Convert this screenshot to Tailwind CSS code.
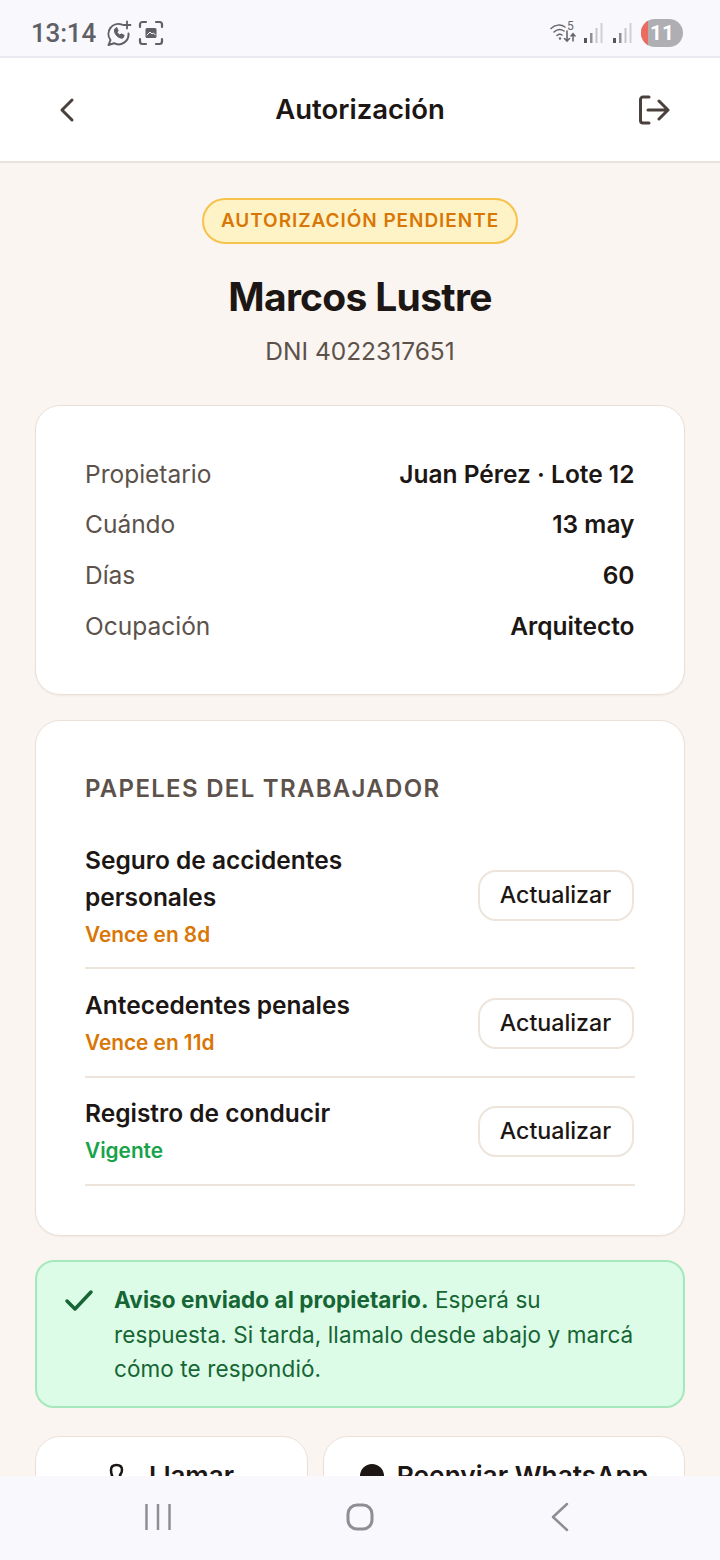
<!DOCTYPE html>
<html lang="es">
<head>
  <meta charset="UTF-8">
  <meta name="viewport" content="width=device-width, initial-scale=1.0">
  <title>Autorización</title>
  <script src="https://cdn.jsdelivr.net/npm/@tailwindcss/browser@4"></script>
</head>
<body class="bg-[#faf5f1] font-['Inter',sans-serif]">
  <div class="flex flex-col h-[1560px] w-[720px] overflow-hidden">
    <!-- status bar -->
    <div class="flex items-center justify-between h-[58px] shrink-0 bg-[#f8f8fd] border-b-2 border-[#e9e9f0] pl-[31px] pr-[37px] pt-[10px]">
      <div class="flex items-center text-[#5f5f66]">
        <span class="font-['Roboto',sans-serif] text-[26px] font-medium leading-none tracking-[-0.2px]">13:14</span>
        <svg class="ml-[10px]" width="26" height="26" viewBox="0 0 26 26" fill="none" stroke="currentColor" stroke-width="2" stroke-linecap="round" stroke-linejoin="round">
          <path d="M16 4.600A10 10 0 0 0 4.500 20L2.500 25L8 23.200A10 10 0 0 0 22.500 13.500"/>
          <path d="M8.500 9.500c-.8 4.500 4 9.500 8.500 8.500l1.200-2.700-3-1.500-1.300 1.300c-1.300-.6-2.300-1.700-2.900-3l1.200-1.200-1.300-3.100z" fill="currentColor" stroke-width="1"/>
          <path d="M21 1.500v7M17.500 5h7" stroke-width="1.800"/>
        </svg>
        <svg class="ml-[6px]" width="26" height="26" viewBox="0 0 26 26" fill="none" stroke="currentColor" stroke-width="2.200" stroke-linecap="round" stroke-linejoin="round">
          <path d="M2 7V4.500A2.500 2.500 0 0 1 4.500 2H8M18 2h3.500A2.500 2.500 0 0 1 24 4.500V7M24 19v2.500a2.500 2.500 0 0 1-2.500 2.500H18M8 24H4.500A2.500 2.500 0 0 1 2 21.500V19"/>
          <rect x="7.500" y="8" width="11" height="10" rx="1.500" fill="currentColor" stroke="none"/>
          <path d="M9 15l3-3 2 2 1.500-1 2 2" stroke="#f8f8fd" stroke-width="1"/>
        </svg>
      </div>
      <div class="flex items-center">
        <svg width="26" height="22" viewBox="0 0 26 22" fill="none" stroke="#66666c" stroke-width="1.500" stroke-linecap="round">
          <path d="M1 6.500C5 2.500 11 2 15 5M4 10c3-2.700 7-3 10-1M7 13.500c1.500-1.300 3.500-1.500 5-.5"/>
          <circle cx="10" cy="16.500" r="1.200" fill="#66666c" stroke="none"/>
          <path d="M17 9v10M14.500 16.500l2.500 2.500 2.500-2.500M23 19v-7M21 14l2-2.200 2 2.200" stroke-width="1.600"/>
        </svg>
        <span class="font-['Roboto',sans-serif] text-[12px] leading-none text-[#66666c] ml-[-9px] mt-[-14px] w-[10px]">5</span>
        <svg class="ml-[6px]" width="20" height="20" viewBox="0 0 20 20">
          <rect x="1" y="15" width="3" height="5" fill="#55555b"/><rect x="7" y="10" width="2.500" height="10" fill="#8e8e94"/><rect x="12.500" y="5" width="2" height="15" fill="#c6c6cb"/><rect x="17.500" y="0" width="2" height="20" fill="#d0d0d5"/>
        </svg>
        <svg class="ml-[9px]" width="20" height="20" viewBox="0 0 20 20">
          <rect x="1" y="15" width="3" height="5" fill="#55555b"/><rect x="7" y="10" width="2.500" height="10" fill="#8e8e94"/><rect x="12.500" y="5" width="2" height="15" fill="#c6c6cb"/><rect x="17.500" y="0" width="2" height="20" fill="#d0d0d5"/>
        </svg>
        <div class="relative ml-[9px] w-[42px] h-[28px] rounded-full bg-[#aeaeb3] overflow-hidden flex items-center justify-center">
          <div class="absolute left-0 top-0 bottom-0 w-[7px] bg-[#ec6a5e]"></div>
          <span class="font-['Roboto',sans-serif] text-[21px] font-bold leading-none text-white">11</span>
        </div>
      </div>
    </div>

    <!-- top bar -->
    <header class="flex items-center justify-between h-[105px] shrink-0 bg-white border-b-2 border-[#eae3dc] pl-[54px] pr-[50px]">
      <svg width="26" height="26" viewBox="0 0 26 26" fill="none" stroke="#4a413c" stroke-width="3" stroke-linecap="round" stroke-linejoin="round">
        <path d="M18 3L8 13l10 10"/>
      </svg>
      <h1 class="ml-[2px] text-[27.500px] font-semibold text-[#1c1614] leading-none">Autorización</h1>
      <svg width="32" height="32" viewBox="0 0 32 32" fill="none" stroke="#4a413c" stroke-width="3" stroke-linecap="round" stroke-linejoin="round">
        <path d="M11 3H5a2.500 2.500 0 0 0-2.500 2.500v21A2.500 2.500 0 0 0 5 29h6"/>
        <path d="M10 16h20M21 7l9 9-9 9"/>
      </svg>
    </header>

    <main class="flex-1 overflow-hidden px-[35px] pt-[35px]">
      <div class="flex flex-col items-center">
        <span class="h-[46px] flex items-center px-[17px] rounded-full bg-[#fef3c7] border-2 border-[#f5c34b] text-[#d97706] text-[19px] font-semibold tracking-[0.95px]">AUTORIZACIÓN PENDIENTE</span>
        <h2 class="mt-[28px] text-[39px] leading-[50px] font-bold text-[#1c1614] tracking-[-0.7px]">Marcos Lustre</h2>
        <p class="mt-[14px] text-[24.500px] leading-[30px] text-[#5c524b]">DNI 4022317651</p>
      </div>

      <!-- datos de la visita -->
      <section class="mt-[39px] bg-white border-[1.500px] border-[#ebe0d8] rounded-[25px] shadow-[0_1px_2px_rgba(0,0,0,0.05)] pl-[49px] pr-[49.500px] pt-[52.500px] h-[290px]">
        <dl class="flex flex-col gap-[20.700px] text-[24.500px] leading-[30px]">
          <div class="flex justify-between"><dt class="text-[#5c524b]">Propietario</dt><dd class="font-semibold text-[#1c1614]">Juan Pérez · Lote 12</dd></div>
          <div class="flex justify-between"><dt class="text-[#5c524b]">Cuándo</dt><dd class="font-semibold text-[#1c1614]">13 may</dd></div>
          <div class="flex justify-between"><dt class="text-[#5c524b]">Días</dt><dd class="font-semibold text-[#1c1614]">60</dd></div>
          <div class="flex justify-between"><dt class="text-[#5c524b]">Ocupación</dt><dd class="font-semibold text-[#1c1614]">Arquitecto</dd></div>
        </dl>
      </section>

      <!-- documentos -->
      <section class="mt-[25px] bg-white border-[1.500px] border-[#ebe0d8] rounded-[25px] shadow-[0_1px_2px_rgba(0,0,0,0.05)] pl-[48.500px] pr-[49.500px] pt-[51.500px] h-[516px]">
        <h3 class="pl-[0.500px] text-[24px] leading-[32px] font-semibold tracking-[1.300px] text-[#5c524b]">PAPELES DEL TRABAJADOR</h3>
        <ul class="mt-[19px]">
          <li class="flex items-center justify-between h-[145px] border-b-2 border-[#ede5dc] pt-[2px]">
            <div class="pl-[0.500px] mt-[2px]">
              <p class="text-[24.500px] leading-[37px] font-semibold text-[#1c1614]">Seguro de accidentes<br>personales</p>
              <p class="text-[20.800px] leading-[37px] font-semibold text-[#d97706]">Vence en 8d</p>
            </div>
            <button class="mr-[1px] mb-[1px] w-[156px] h-[51px] rounded-[18px] border-2 border-[#ede5dc] bg-white text-[23.200px] font-medium text-[#1c1614]">Actualizar</button>
          </li>
          <li class="flex items-center justify-between h-[109px] border-b-2 border-[#ede5dc] pt-[2px]">
            <div class="pl-[0.500px] mt-[2px]">
              <p class="text-[24.500px] leading-[37px] font-semibold text-[#1c1614]">Antecedentes penales</p>
              <p class="text-[20.800px] leading-[37px] font-semibold text-[#d97706]">Vence en 11d</p>
            </div>
            <button class="mr-[1px] w-[156px] h-[51px] rounded-[18px] border-2 border-[#ede5dc] bg-white text-[23.200px] font-medium text-[#1c1614]">Actualizar</button>
          </li>
          <li class="flex items-center justify-between h-[108px] border-b-2 border-[#ede5dc] pt-[2px]">
            <div class="pl-[0.500px]">
              <p class="text-[24.500px] leading-[37px] font-semibold text-[#1c1614]">Registro de conducir</p>
              <p class="text-[20.800px] leading-[37px] font-semibold text-[#16a34a]">Vigente</p>
            </div>
            <button class="mr-[1px] mb-[1px] w-[156px] h-[51px] rounded-[18px] border-2 border-[#ede5dc] bg-white text-[23.200px] font-medium text-[#1c1614]">Actualizar</button>
          </li>
        </ul>
      </section>

      <!-- aviso -->
      <div class="mt-[24px] flex h-[148px] bg-[#dcfce7] border-2 border-[#a5e8bc] rounded-[19px] pl-[27px] pr-[30px] pt-[21px]">
        <svg class="mt-[6px] shrink-0" width="30" height="24" viewBox="0 0 30 24" fill="none" stroke="#166534" stroke-width="3.500" stroke-linecap="round" stroke-linejoin="round">
          <path d="M3 12l8 8L27 3"/>
        </svg>
        <p class="ml-[20px] text-[22.500px] leading-[34.500px] tracking-[0.1px] text-[#166534]"><strong class="font-bold tracking-[0.07px]">Aviso enviado al propietario.</strong> Esperá su respuesta. Si tarda, llamalo desde abajo y marcá cómo te respondió.</p>
      </div>

      <!-- acciones -->
      <div class="mt-[28px] flex gap-[15px]">
        <button class="w-[273px] h-[100px] shrink-0 bg-white border-[1.500px] border-[#ebe0d8] rounded-[25px] flex justify-center items-start pt-[24px] gap-[14px] text-[26px] leading-[30px] font-semibold text-[#1c1614]">
          <svg class="mt-[2px]" width="26" height="26" viewBox="0 0 26 26" fill="none" stroke="#1c1614" stroke-width="2.500" stroke-linecap="round" stroke-linejoin="round"><path d="M2 7c0-3 2-5 5.500-5S13 4 13 7c0 2-1 4-2 5 1 3 4 6 7 7M2 7c0 8 6 15 15 16"/></svg>
          Llamar
        </button>
        <button class="w-[362px] h-[100px] shrink-0 bg-white border-[1.500px] border-[#ebe0d8] rounded-[25px] flex justify-center items-start pt-[24px] gap-[13px] text-[26.300px] leading-[30px] font-semibold text-[#1c1614]">
          <span class="mt-[3px] w-[24px] h-[24px] rounded-full bg-[#1c1614]"></span>
          Reenviar WhatsApp
        </button>
      </div>
    </main>

    <!-- navigation bar -->
    <nav class="flex items-center justify-between h-[84px] shrink-0 bg-[#f8f8fd] pl-[145px] pr-[150px] pb-[3px]">
      <svg width="26" height="28" viewBox="0 0 26 28" stroke="#8e8e94" stroke-width="2.500"><path d="M1.500 1v26M13 1v26M24.500 1v26"/></svg>
      <svg class="-ml-[2px]" width="28" height="28" viewBox="0 0 28 28" fill="none" stroke="#8e8e94" stroke-width="3"><rect x="2" y="2" width="24" height="24" rx="9"/></svg>
      <svg width="20" height="30" viewBox="0 0 20 30" fill="none" stroke="#8e8e94" stroke-width="2.500" stroke-linecap="round" stroke-linejoin="round"><path d="M17 2L3 15l14 13"/></svg>
    </nav>
  </div>
</body>
</html>
